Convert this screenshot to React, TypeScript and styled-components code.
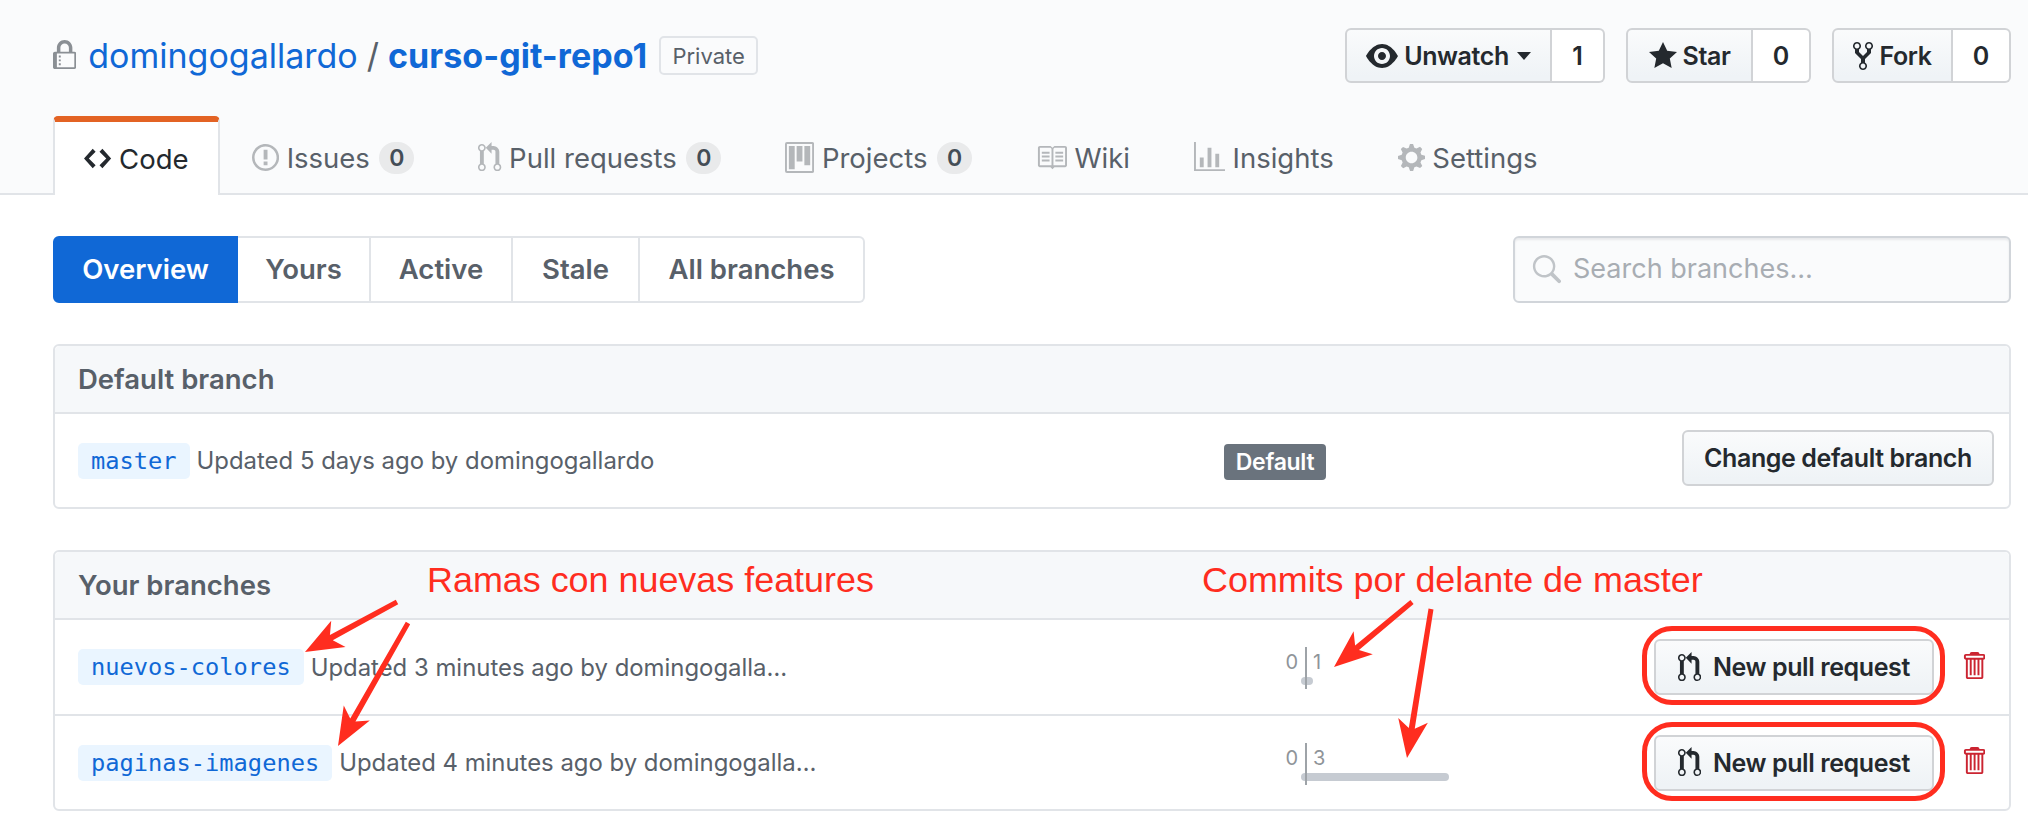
import React from 'react';
import styled, { createGlobalStyle } from 'styled-components';

const UI_FONT = `Inter, "Liberation Sans", sans-serif`;

const GlobalStyle = createGlobalStyle`
  html, body {
    margin: 0;
    background: #fff;
  }
  body {
    font-family: ${UI_FONT};
    color: #24292e;
  }
`;

const paths = {
  lock: 'M4 13H3v-1h1v1zm8-6v7c0 .55-.45 1-1 1H1c-.55 0-1-.45-1-1V7c0-.55.45-1 1-1h1V4c0-2.2 1.8-4 4-4s4 1.8 4 4v2h1c.55 0 1 .45 1 1zM3.8 6h4.41V4c0-1.22-.98-2.2-2.2-2.2-1.22 0-2.2.98-2.2 2.2v2H3.8zM11 7H2v7h9V7zM4 8H3v1h1V8zm0 2H3v1h1v-1z',
  eye: 'M8.06 2C3 2 0 8 0 8s3 6 8.06 6C13 14 16 8 16 8s-3-6-7.94-6zM8 12c-2.2 0-4-1.78-4-4 0-2.2 1.8-4 4-4 2.22 0 4 1.8 4 4 0 2.22-1.78 4-4 4zm2-4c0 1.11-.89 2-2 2-1.11 0-2-.89-2-2 0-1.11.89-2 2-2 1.11 0 2 .89 2 2z',
  star: 'M14 6l-4.9-.64L7 1 4.9 5.36 0 6l3.6 3.26L2.67 14 7 11.67 11.33 14l-.93-4.74L14 6z',
  fork: 'M8 1a1.993 1.993 0 0 0-1 3.72V6L5 8 3 6V4.72A1.993 1.993 0 0 0 2 1a1.993 1.993 0 0 0-1 3.72V6.5l3 3v1.78A1.993 1.993 0 0 0 5 15a1.993 1.993 0 0 0 1-3.72V9.5l3-3V4.72A1.993 1.993 0 0 0 8 1zM2 4.2C1.34 4.2.8 3.65.8 3c0-.65.55-1.2 1.2-1.2.65 0 1.2.55 1.2 1.2 0 .65-.55 1.2-1.2 1.2zm3 10c-.66 0-1.2-.55-1.2-1.2 0-.65.55-1.2 1.2-1.2.65 0 1.2.55 1.2 1.2 0 .65-.55 1.2-1.2 1.2zm3-10c-.66 0-1.2-.55-1.2-1.2 0-.65.55-1.2 1.2-1.2.65 0 1.2.55 1.2 1.2 0 .65-.55 1.2-1.2 1.2z',
  code: 'M9.5 3L8 4.5 11.5 8 8 11.5 9.5 13 14 8 9.5 3zm-5 0L0 8l4.5 5L6 11.5 2.5 8 6 4.5 4.5 3z',
  issue: 'M7 2.3c3.14 0 5.7 2.56 5.7 5.7s-2.56 5.7-5.7 5.7A5.71 5.71 0 0 1 1.3 8c0-3.14 2.56-5.7 5.7-5.7zM7 1C3.14 1 0 4.14 0 8s3.14 7 7 7 7-3.14 7-7-3.14-7-7-7zm1 3H6v5h2V4zm0 6H6v2h2v-2z',
  pull: 'M11 11.28V5c-.03-.78-.34-1.47-.94-2.06C9.46 2.35 8.78 2.03 8 2H7V0L4 3l3 3V4h1c.27.02.48.11.69.31.21.2.3.42.31.69v6.28A1.993 1.993 0 0 0 10 15a1.993 1.993 0 0 0 1-3.72zm-1 2.92c-.66 0-1.2-.55-1.2-1.2 0-.65.55-1.2 1.2-1.2.65 0 1.2.55 1.2 1.2 0 .65-.55 1.2-1.2 1.2zM4 3c0-1.11-.89-2-2-2a1.993 1.993 0 0 0-1 3.72v6.56A1.993 1.993 0 0 0 2 15a1.993 1.993 0 0 0 1-3.72V4.72c.59-.34 1-.98 1-1.72zm-.8 10c0 .66-.55 1.2-1.2 1.2-.65 0-1.2-.55-1.2-1.2 0-.65.55-1.2 1.2-1.2.65 0 1.2.55 1.2 1.2zM2 4.2C1.34 4.2.8 3.65.8 3c0-.65.55-1.2 1.2-1.2.65 0 1.2.55 1.2 1.2 0 .65-.55 1.2-1.2 1.2z',
  project: 'M10 12h3V2h-3v10zm-4-2h3V2H6v8zm-4 4h3V2H2v12zm-1 1h13V1H1v14zM14 0H1a1 1 0 0 0-1 1v14a1 1 0 0 0 1 1h13a1 1 0 0 0 1-1V1a1 1 0 0 0-1-1z',
  book: 'M3 5h4v1H3V5zm0 3h4V7H3v1zm0 2h4V9H3v1zm11-5h-4v1h4V5zm0 2h-4v1h4V7zm0 2h-4v1h4V9zm2-6v9c0 .55-.45 1-1 1H9.5l-1 1-1-1H2c-.55 0-1-.45-1-1V3c0-.55.45-1 1-1h5.5l1 1 1-1H15c.55 0 1 .45 1 1zm-8 .5L7.5 3H2v9h6V3.5zm7-.5H9.5l-.5.5V12h6V3z',
  graph: 'M16 14v1H0V0h1v14h15zM5 13H3V8h2v5zm4 0H7V3h2v10zm4 0h-2V6h2v7z',
  gear: 'M14 8.77v-1.6l-1.94-.64-.45-1.09.88-1.84-1.13-1.13-1.81.91-1.09-.45-.69-1.92h-1.6l-.63 1.94-1.11.45-1.84-.88-1.13 1.13.91 1.81-.45 1.09L0 7.23v1.59l1.94.64.45 1.09-.88 1.84 1.13 1.13 1.81-.91 1.09.45.69 1.92h1.59l.63-1.94 1.11-.45 1.84.88 1.13-1.13-.92-1.81.47-1.09L14 8.75v.02zM7 11c-1.66 0-3-1.34-3-3s1.34-3 3-3 3 1.34 3 3-1.34 3-3 3z',
  search: 'M15.7 13.3l-3.81-3.83A5.93 5.93 0 0 0 13 6c0-3.31-2.69-6-6-6S1 2.69 1 6s2.69 6 6 6c1.3 0 2.48-.41 3.47-1.11l3.83 3.81c.19.2.45.3.7.3.25 0 .52-.09.7-.3a.996.996 0 0 0 0-1.41v.01zM7 10.7c-2.59 0-4.7-2.11-4.7-4.7 0-2.59 2.11-4.7 4.7-4.7 2.59 0 4.7 2.11 4.7 4.7 0 2.59-2.11 4.7-4.7 4.7z',
  trash: 'M11 2H9c0-.55-.45-1-1-1H5c-.55 0-1 .45-1 1H2c-.55 0-1 .45-1 1v1c0 .55.45 1 1 1v9c0 .55.45 1 1 1h7c.55 0 1-.45 1-1V5c.55 0 1-.45 1-1V3c0-.55-.45-1-1-1zm-1 12H3V5h1v8h1V5h1v8h1V5h1v8h1V5h1v9zm1-10H2V3h9v1z',
};

type IconName = keyof typeof paths;

const viewWidth: Record<IconName, number> = {
  lock: 12, eye: 16, star: 14, fork: 10, code: 14, issue: 14, pull: 12,
  project: 15, book: 16, graph: 16, gear: 14, search: 16, trash: 12,
};

function Icon({ name, size = 31, color = 'currentColor' }: { name: IconName; size?: number; color?: string }) {
  const w = viewWidth[name];
  return (
    <svg width={(size * w) / 16} height={size} viewBox={`0 0 ${w} 16`} fill={color} style={{ flexShrink: 0 }}>
      <path fillRule="evenodd" d={paths[name]} />
    </svg>
  );
}

// red arrow drawn by hand on the screenshot, from tail to tip
function Arrow({ from, to }: { from: [number, number]; to: [number, number] }) {
  const dx = to[0] - from[0];
  const dy = to[1] - from[1];
  const len = Math.hypot(dx, dy);
  const ux = dx / len;
  const uy = dy / len;
  const at = (back: number, side: number) =>
    `${to[0] - ux * back - uy * side},${to[1] - uy * back + ux * side}`;
  const points = [
    at(0, 0),
    at(38, 15),
    at(30, 3),
    at(len, 2.5),
    at(len, -2.5),
    at(30, -3),
    at(38, -15),
  ].join(' ');
  return <polygon points={points} fill="#ff2d1f" />;
}

export default function App() {
  return (
    <Page>
      <GlobalStyle />
      <RepoHead>
        <TitleRow>
          <Title>
            <LockWrap><Icon name="lock" size={31} color="#8a8f94" /></LockWrap>
            <OwnerLink>domingogallardo</OwnerLink>
            <Slash>/</Slash>
            <RepoLink>curso-git-repo1</RepoLink>
            <PrivateLabel>Private</PrivateLabel>
          </Title>
          <Actions>
            <ActionGroup>
              <ActionButton $width={207}>
                <Icon name="eye" size={32} />
                Unwatch
                <Caret />
              </ActionButton>
              <ActionCount $width={53}>1</ActionCount>
            </ActionGroup>
            <ActionGroup>
              <ActionButton $width={127}>
                <Icon name="star" size={32} />
                Star
              </ActionButton>
              <ActionCount $width={58}>0</ActionCount>
            </ActionGroup>
            <ActionGroup>
              <ActionButton $width={121}>
                <Icon name="fork" size={32} />
                Fork
              </ActionButton>
              <ActionCount $width={58}>0</ActionCount>
            </ActionGroup>
          </Actions>
        </TitleRow>
        <Tabs>
          <ActiveTab><Icon name="code" size={31} color="#24292e" /> Code</ActiveTab>
          <Tab><Icon name="issue" size={31} color="#b4b7ba" /> Issues <Counter>0</Counter></Tab>
          <Tab><Icon name="pull" size={31} color="#b4b7ba" /> Pull requests <Counter>0</Counter></Tab>
          <Tab><Icon name="project" size={31} color="#b4b7ba" /> Projects <Counter>0</Counter></Tab>
          <Tab><Icon name="book" size={31} color="#b4b7ba" /> Wiki</Tab>
          <Tab><Icon name="graph" size={31} color="#b4b7ba" /> Insights</Tab>
          <Tab><Icon name="gear" size={31} color="#b4b7ba" /> Settings</Tab>
        </Tabs>
      </RepoHead>

      <Content>
        <FilterRow>
          <SubNav>
            <SubNavItem $active $width={185}>Overview</SubNavItem>
            <SubNavItem $width={133}>Yours</SubNavItem>
            <SubNavItem $width={142}>Active</SubNavItem>
            <SubNavItem $width={127}>Stale</SubNavItem>
            <SubNavItem $width={225}>All branches</SubNavItem>
          </SubNav>
          <SearchBox>
            <Icon name="search" size={30} color="#c0c4c8" />
            <SearchInput placeholder="Search branches…" />
          </SearchBox>
        </FilterRow>

        <Card>
          <CardHeader>Default branch</CardHeader>
          <Row $height={93}>
            <BranchInfo>
              <BranchName>master</BranchName>
              <Updated>Updated 5 days ago by domingogallardo</Updated>
            </BranchInfo>
            <Middle><DefaultBadge>Default</DefaultBadge></Middle>
            <RowActions>
              <PlainButton>Change default branch</PlainButton>
            </RowActions>
          </Row>
        </Card>

        <Card>
          <CardHeader>Your branches</CardHeader>
          <Row $height={94} $divided>
            <BranchInfo>
              <BranchName>nuevos-colores</BranchName>
              <Updated>Updated 3 minutes ago by domingogalla…</Updated>
            </BranchInfo>
            <Middle>
              <Graph>
                <Counts><Behind>0</Behind><Ahead>1</Ahead></Counts>
                <AheadBar style={{ width: 12 }} />
              </Graph>
            </Middle>
            <RowActions>
              <Highlight>
                <PullButton><Icon name="pull" size={31} color="#24292e" /> New pull request</PullButton>
              </Highlight>
              <TrashButton><Icon name="trash" size={31} color="#cb2431" /></TrashButton>
            </RowActions>
          </Row>
          <Row $height={93}>
            <BranchInfo>
              <BranchName>paginas-imagenes</BranchName>
              <Updated>Updated 4 minutes ago by domingogalla…</Updated>
            </BranchInfo>
            <Middle>
              <Graph>
                <Counts><Behind>0</Behind><Ahead>3</Ahead></Counts>
                <AheadBar style={{ width: 148 }} />
              </Graph>
            </Middle>
            <RowActions>
              <Highlight>
                <PullButton><Icon name="pull" size={31} color="#24292e" /> New pull request</PullButton>
              </Highlight>
              <TrashButton><Icon name="trash" size={31} color="#cb2431" /></TrashButton>
            </RowActions>
          </Row>
        </Card>
      </Content>

      <NoteLeft>Ramas con nuevas features</NoteLeft>
      <NoteRight>Commits por delante de master</NoteRight>
      <ArrowLayer width={2028} height={836} viewBox="0 0 2028 836">
        <Arrow from={[397, 602]} to={[305, 652]} />
        <Arrow from={[408, 623]} to={[338, 746]} />
        <Arrow from={[1412, 602]} to={[1334, 667]} />
        <Arrow from={[1431, 609]} to={[1407, 758]} />
      </ArrowLayer>
    </Page>
  );
}

const Page = styled.div`
  position: relative;
  width: 2028px;
  height: 836px;
  overflow: hidden;
  background: #fff;
`;

const RepoHead = styled.div`
  height: 195px;
  box-sizing: border-box;
  background: #fafbfc;
  border-bottom: 2px solid #e1e4e8;
  padding: 28px 17px 0 53px;
  display: flex;
  flex-direction: column;
  justify-content: space-between;
`;

const TitleRow = styled.div`
  display: flex;
  justify-content: space-between;
  align-items: flex-start;
`;

const Title = styled.div`
  display: flex;
  align-items: center;
  height: 55px;
  font-size: 34px;
`;

const LockWrap = styled.span`
  display: flex;
  margin-right: 12px;
`;

const OwnerLink = styled.a`
  color: #1068d6;
`;

const Slash = styled.span`
  color: #586069;
  margin: 0 9px;
`;

const RepoLink = styled.a`
  color: #1068d6;
  font-weight: 700;
  letter-spacing: 0.05px;
`;

const PrivateLabel = styled.span`
  margin-left: 12px;
  height: 39px;
  box-sizing: border-box;
  width: 99px;
  display: flex;
  align-items: center;
  justify-content: center;
  border: 2px solid #e1e4e8;
  border-radius: 5px;
  font-size: 22px;
  letter-spacing: 0;
  color: #586069;
`;

const Actions = styled.div`
  display: flex;
  gap: 21px;
`;

const ActionGroup = styled.div`
  display: flex;
  height: 55px;
`;

const ActionButton = styled.div<{ $width: number }>`
  width: ${(p) => p.$width}px;
  box-sizing: border-box;
  display: flex;
  align-items: center;
  justify-content: center;
  gap: 6px;
  font-size: 25px;
  font-weight: 600;
  letter-spacing: -0.4px;
  background: linear-gradient(#fafbfc, #eff3f6 90%);
  border: 2px solid #d1d3d6;
  border-radius: 6px 0 0 6px;
`;

const Caret = styled.span`
  margin-left: 2px;
  border-style: solid;
  border-width: 8px 7px 0;
  border-color: #24292e transparent transparent;
`;

const ActionCount = styled.div<{ $width: number }>`
  width: ${(p) => p.$width}px;
  box-sizing: border-box;
  display: flex;
  align-items: center;
  justify-content: center;
  font-size: 25px;
  font-weight: 600;
  background: #fff;
  border: 2px solid #d1d3d6;
  border-left: 0;
  border-radius: 0 6px 6px 0;
`;

const Tabs = styled.div`
  display: flex;
  height: 79px;
  margin-bottom: -2px;
`;

const Tab = styled.div`
  display: flex;
  align-items: center;
  gap: 7.5px;
  padding: 4px 32px 0;
  font-size: 27.5px;
  color: #586069;
`;

const ActiveTab = styled(Tab)`
  width: 167px;
  box-sizing: border-box;
  justify-content: center;
  padding: 0;
  color: #24292e;
  background: #fff;
  border: 2px solid #e1e4e8;
  border-top: 6px solid #e36324;
  border-bottom: 0;
  border-radius: 5px 5px 0 0;
`;

const Counter = styled.span`
  margin-left: 2px;
  width: 35px;
  height: 32px;
  display: flex;
  align-items: center;
  justify-content: center;
  border-radius: 16px;
  background: #e9eaeb;
  font-size: 23px;
  font-weight: 600;
  color: #444d56;
`;

const Content = styled.div`
  padding: 41px 17px 0 53px;
  display: flex;
  flex-direction: column;
  gap: 41px;
`;

const FilterRow = styled.div`
  display: flex;
  justify-content: space-between;
  height: 67px;
`;

const SubNav = styled.div`
  display: flex;
`;

const SubNavItem = styled.div<{ $active?: boolean; $width: number }>`
  width: ${(p) => p.$width}px;
  box-sizing: border-box;
  display: flex;
  align-items: center;
  justify-content: center;
  padding-bottom: 2px;
  font-size: 27.5px;
  font-weight: 600;
  color: ${(p) => (p.$active ? '#fff' : '#586069')};
  background: ${(p) => (p.$active ? '#1068d6' : '#fff')};
  border: 2px solid ${(p) => (p.$active ? '#1068d6' : '#e1e4e8')};
  border-left-width: ${(p) => (p.$active ? 2 : 0)}px;

  &:first-child {
    border-radius: 6px 0 0 6px;
  }
  &:last-child {
    border-radius: 0 6px 6px 0;
  }
`;

const SearchBox = styled.div`
  width: 498px;
  box-sizing: border-box;
  display: flex;
  align-items: center;
  gap: 12px;
  padding-left: 16px;
  background: #fafbfc;
  border: 2px solid #d1d5da;
  border-radius: 6px;
  box-shadow: inset 0 2px 2px rgba(27, 31, 35, 0.075);
`;

const SearchInput = styled.input`
  flex: 1;
  min-width: 0;
  border: 0;
  outline: 0;
  padding: 0 0 2px;
  background: transparent;
  font-family: ${UI_FONT};
  font-size: 27px;

  &::placeholder {
    color: #a8adb3;
    opacity: 1;
  }
`;

const Card = styled.div`
  border: 2px solid #e1e4e8;
  border-radius: 6px;
`;

const CardHeader = styled.div`
  height: 68px;
  box-sizing: border-box;
  display: flex;
  align-items: center;
  padding-left: 23px;
  background: #f6f8fa;
  border-bottom: 2px solid #e1e4e8;
  border-radius: 5px 5px 0 0;
  font-size: 27.5px;
  font-weight: 600;
  color: #586069;
`;

const Row = styled.div<{ $height: number; $divided?: boolean }>`
  height: ${(p) => p.$height + (p.$divided ? 2 : 0)}px;
  box-sizing: border-box;
  display: flex;
  align-items: center;
  padding-left: 23px;
  border-bottom: ${(p) => (p.$divided ? '2px solid #e1e4e8' : '0')};
`;

const BranchInfo = styled.div`
  width: 1146px;
  display: flex;
  align-items: center;
  gap: 7px;
`;

const BranchName = styled.span`
  height: 36px;
  display: flex;
  align-items: center;
  padding: 0 13px;
  border-radius: 5px;
  background: #eaf5ff;
  color: #1068d6;
  font-family: "DejaVu Sans Mono", "Liberation Mono", monospace;
  font-size: 23.7px;
`;

const Updated = styled.span`
  font-size: 23.9px;
  color: #586069;
`;

const Middle = styled.div`
  flex: 1;
  display: flex;
`;

const DefaultBadge = styled.span`
  width: 102px;
  height: 36px;
  margin-top: 3px;
  display: flex;
  align-items: center;
  justify-content: center;
  border-radius: 4px;
  background: #6a737d;
  color: #fff;
  font-size: 23px;
  font-weight: 600;
  letter-spacing: -0.3px;
`;

const RowActions = styled.div`
  display: flex;
  align-items: center;
  padding-right: 15px;
`;

const PlainButton = styled.div`
  width: 312px;
  height: 56px;
  margin-top: -5px;
  box-sizing: border-box;
  display: flex;
  align-items: center;
  justify-content: center;
  font-size: 25px;
  font-weight: 600;
  letter-spacing: -0.4px;
  background: linear-gradient(#fafbfc, #eff3f6 90%);
  border: 2px solid #d1d3d6;
  border-radius: 6px;
`;

const Highlight = styled.div`
  position: relative;

  &::after {
    content: '';
    position: absolute;
    top: -13px;
    right: -11px;
    bottom: -10px;
    left: -12px;
    border: 5px solid #ff2d1f;
    border-radius: 30px;
  }
`;

const PullButton = styled(PlainButton)`
  width: 280px;
  margin-top: 0;
  gap: 12px;
`;

const TrashButton = styled.div`
  display: flex;
  margin: -4px 9px 0 28px;
`;

const Graph = styled.div`
  position: relative;
  height: 42px;
  margin-top: 2px;

  &::before {
    content: '';
    position: absolute;
    left: 81px;
    top: 0;
    bottom: 0;
    width: 2px;
    background: #9ea3a8;
    z-index: 1;
  }
`;

const Counts = styled.div`
  display: flex;
  height: 30px;
  align-items: center;
  font-size: 20px;
  color: #8f9499;
`;

const Behind = styled.span`
  width: 74px;
  text-align: right;
`;

const Ahead = styled.span`
  margin-left: 15px;
`;

const AheadBar = styled.div`
  height: 8px;
  margin-left: 77px;
  border-radius: 4px;
  background: #c6cbd2;
`;

const Note = styled.div`
  position: absolute;
  top: 558px;
  font-family: "Liberation Sans", Arial, sans-serif;
  font-size: 35.9px;
  line-height: 44px;
  color: #ff2d1f;
  white-space: nowrap;
`;

const NoteLeft = styled(Note)`
  left: 427px;
`;

const NoteRight = styled(Note)`
  left: 1202px;
`;

const ArrowLayer = styled.svg`
  position: absolute;
  top: 0;
  left: 0;
  pointer-events: none;
`;
